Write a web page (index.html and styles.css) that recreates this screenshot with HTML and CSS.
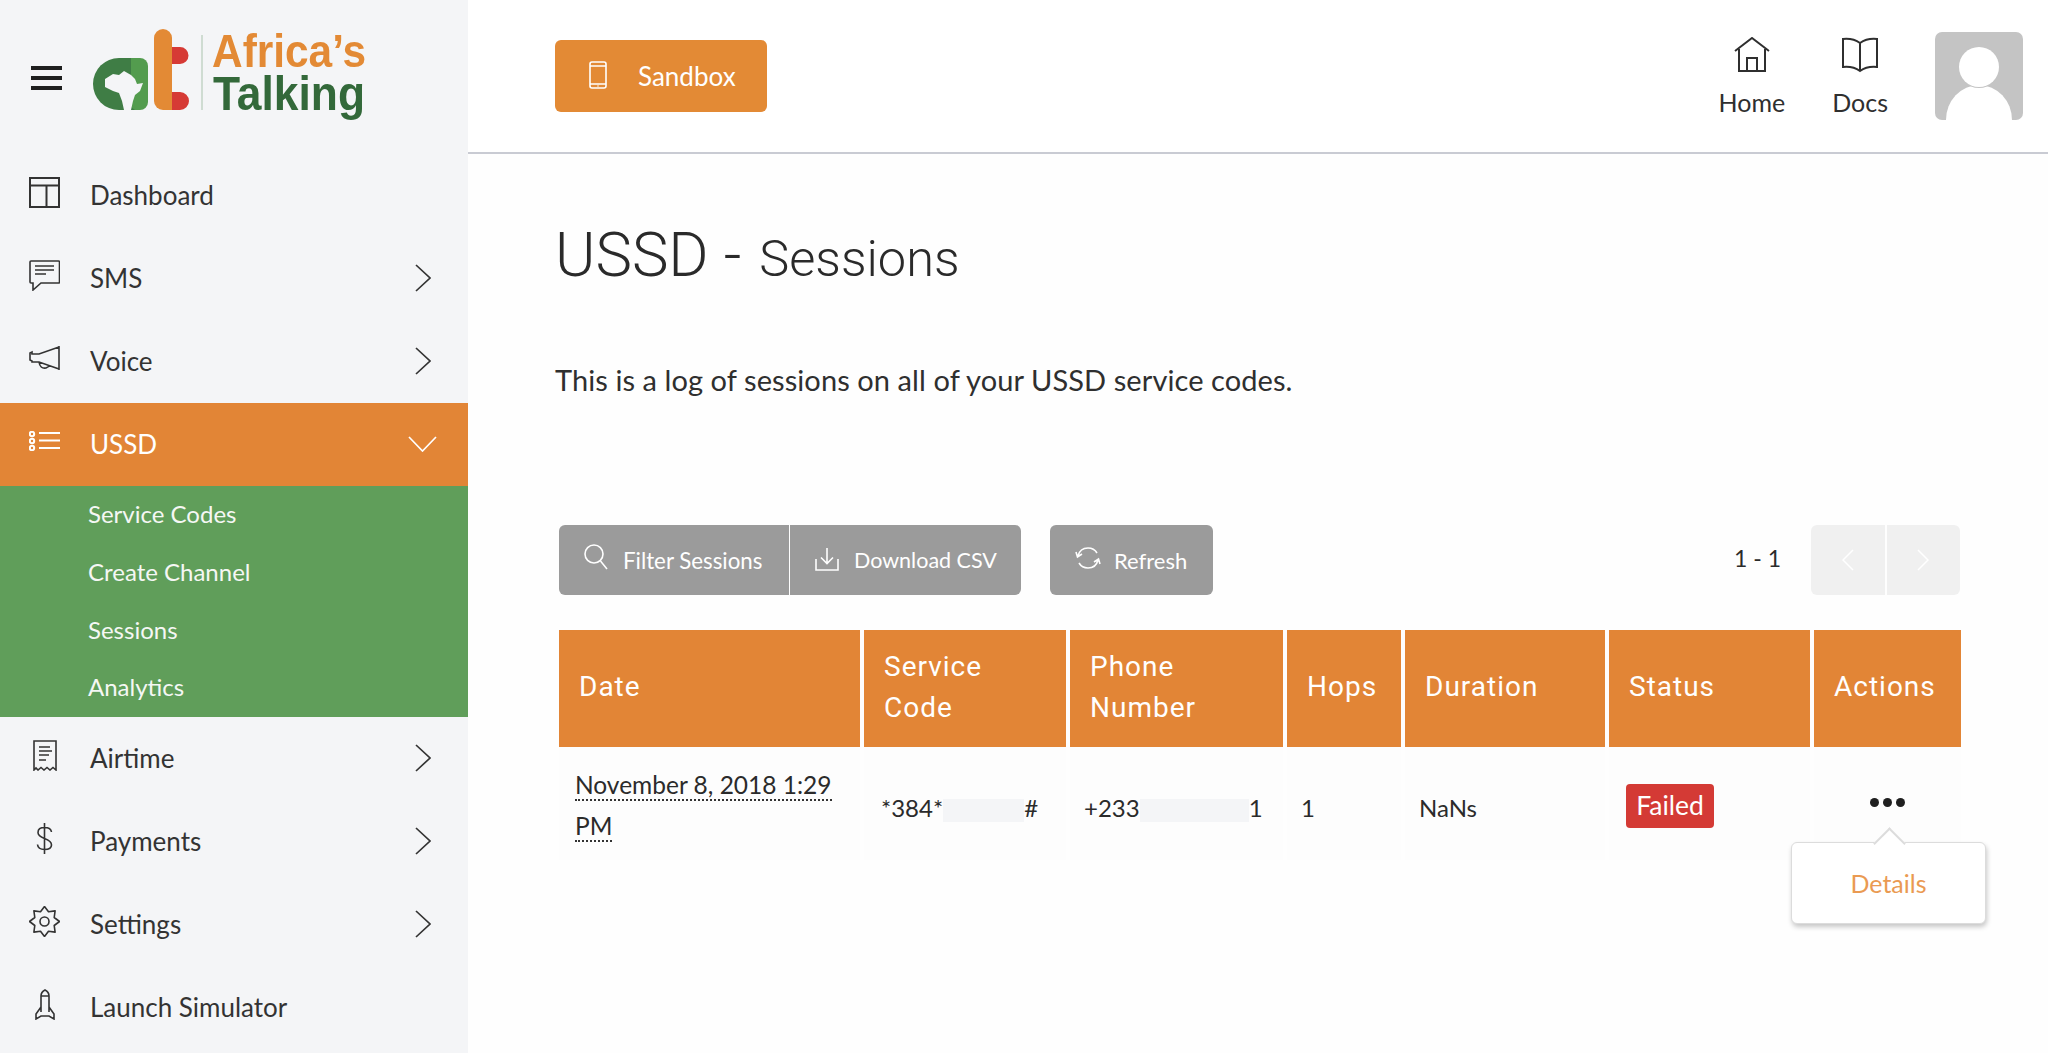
FILE: index.html
```html
<!DOCTYPE html>
<html lang="en">
<head>
<meta charset="utf-8">
<title>USSD - Sessions</title>
<link rel="stylesheet" href="styles.css">
</head>
<body>
<div class="app">
  <aside class="sidebar">
    <div class="brand">
      <span class="burger"><i></i><i></i><i></i></span>
      <svg class="logo" width="273" height="93" viewBox="0 0 273 93">
        <path fill="#3f7d45" d="M26 29H42V81H26A26 26 0 0 1 26 29Z"/>
        <path fill="#539c4e" d="M38 29H47A8 8 0 0 1 55 37V73A8 8 0 0 1 47 81H42A7 7 0 0 1 38 77Z"/>
        <path fill="#f4f5f7" d="M12 50L20 45L26 46L31 42L38 46L42 50L44 55L50 54L47 62L42 66L40 72L38 81H31L29 72L26 64L20 62L12 58Z"/>
        <path fill="#d63a35" d="M72 18H87A8.500 8.500 0 0 1 87 35H72ZM72 63H87A9 9 0 0 1 87 81H72Z"/>
        <path fill="#e38a35" d="M70 0A9 9 0 0 1 79 9V81H70A9 9 0 0 1 61 72V9A9 9 0 0 1 70 0Z"/>
        <rect x="108" y="6" width="2" height="75" fill="#cfdcd2"/>
        <text class="logo-top" x="119" y="38" textLength="154" lengthAdjust="spacingAndGlyphs">Africa’s</text>
        <text class="logo-bottom" x="120" y="81" textLength="152" lengthAdjust="spacingAndGlyphs">Talking</text>
      </svg>
    </div>
    <nav>
      <a class="nav-item"><span class="nav-icon"><svg width="31" height="31" viewBox="0 0 31 31" class="line"><path d="M1 1H30V30H1ZM1 8.500H30M17.500 8.500V30"/></svg></span><span>Dashboard</span></a>
      <a class="nav-item"><span class="nav-icon"><svg width="31" height="31" viewBox="0 0 31 31" class="line thin"><path d="M2 1H29.500Q30.500 1 30.500 2V22Q30.500 23 29.500 23H12L4 30V23H2Q1 23 1 22V2Q1 1 2 1ZM6 6H25M6 10H25M6 14H17"/></svg></span><span>SMS</span><svg class="chev" width="16" height="28" viewBox="0 0 16 28"><path d="M1 1L15 14L1 27"/></svg></a>
      <a class="nav-item"><span class="nav-icon"><svg width="31" height="26" viewBox="0 0 31 26" class="line thin"><path d="M30 1V25M30 2L10 9H3V7L1 8V15L3 16V17H10L30 24M10 17Q11 24 17 23Q20 22 20.500 20"/></svg></span><span>Voice</span><svg class="chev" width="16" height="28" viewBox="0 0 16 28"><path d="M1 1L15 14L1 27"/></svg></a>
      <a class="nav-item active"><span class="nav-icon"><svg width="31" height="20" viewBox="0 0 31 20" class="line"><circle cx="3" cy="3" r="2.200"/><circle cx="3" cy="10" r="2.200"/><circle cx="3" cy="17" r="2.200"/><path d="M10 2H31M10 9.500H31M10 17H31"/></svg></span><span>USSD</span><svg class="chev-down" width="29" height="16" viewBox="0 0 29 16"><path d="M1 1L14.500 15L28 1"/></svg></a>
      <ul class="subnav">
        <li>Service Codes</li>
        <li>Create Channel</li>
        <li>Sessions</li>
        <li>Analytics</li>
      </ul>
      <a class="nav-item"><span class="nav-icon"><svg width="24" height="31" viewBox="0 0 24 31" class="line thin"><path d="M1 30V1H23V30L20 27.500L17 30L14 27.500L11 30L8 27.500L5 30L3 28ZM6 7H17M6 11H19M6 15H16M6 20H13"/></svg></span><span>Airtime</span><svg class="chev" width="16" height="28" viewBox="0 0 16 28"><path d="M1 1L15 14L1 27"/></svg></a>
      <a class="nav-item"><span class="nav-icon"><svg width="17" height="31" viewBox="0 0 17 31" class="line thin"><path d="M8.500 0V31M15.500 9Q15 4.500 8.500 4.500Q2 4.500 2 9.500Q2 13 8.500 15.500Q15.500 18 15.500 22Q15.500 26.500 8.500 26.500Q2 26.500 1.500 21.500"/></svg></span><span>Payments</span><svg class="chev" width="16" height="28" viewBox="0 0 16 28"><path d="M1 1L15 14L1 27"/></svg></a>
      <a class="nav-item"><span class="nav-icon"><svg width="31" height="31" viewBox="0 0 31 31" class="line thin gear"><circle cx="15.500" cy="15.500" r="4.500"/><path d="M15.500 .5L19.500 5.800L26.100 4.900L25.200 11.500L30.500 15.500L25.200 19.500L26.100 26.100L19.500 25.200L15.500 30.500L11.500 25.200L4.900 26.100L5.800 19.500L.5 15.500L5.800 11.500L4.900 4.900L11.500 5.800Z"/></svg></span><span>Settings</span><svg class="chev" width="16" height="28" viewBox="0 0 16 28"><path d="M1 1L15 14L1 27"/></svg></a>
      <a class="nav-item"><span class="nav-icon"><svg width="20" height="31" viewBox="0 0 20 31" class="line thin"><path d="M6 23V7Q6 3 10 1Q14 3 14 7V23M6 7H14M6 18L1 25V30L6 27H14L19 30V25L14 18"/></svg></span><span>Launch Simulator</span></a>
    </nav>
  </aside>

  <div class="main">
    <header class="topbar">
      <a class="sandbox"><svg width="18" height="28" viewBox="0 0 18 28" class="line thin"><rect x="1" y="1" width="16" height="26" rx="2"/><path d="M1 5H17M1 23H17M8.500 25H9.500"/></svg><span>Sandbox</span></a>
      <div class="top-right">
        <a class="top-link"><svg width="36" height="36" viewBox="0 0 36 36" class="line"><path d="M1 14L18 1L35 14M5 12V34H31V12M13 34V21H23V34"/></svg><span>Home</span></a>
        <a class="top-link"><svg width="36" height="36" viewBox="0 0 36 36" class="line"><path d="M18 6Q11 1 1 2V30Q11 29 18 34Q25 29 35 30V2Q25 1 18 6ZM18 6V34"/></svg><span>Docs</span></a>
        <svg class="avatar" width="88" height="88" viewBox="0 0 88 88"><rect width="88" height="88" rx="7" fill="#c4c4c4"/><ellipse cx="44" cy="88" rx="33" ry="35" fill="#fff"/><circle cx="44" cy="35" r="21" fill="#c4c4c4"/><circle cx="44" cy="35" r="20" fill="#fff"/></svg>
      </div>
    </header>

    <section class="content">
      <h1>USSD - <small>Sessions</small></h1>
      <p class="lead">This is a log of sessions on all of your USSD service codes.</p>

      <div class="toolbar">
        <div class="btn-group">
          <a class="btn filter"><svg width="24" height="26" viewBox="0 0 24 26" class="line thin"><circle cx="10" cy="10" r="9"/><path d="M16.500 17L23 25"/></svg><span>Filter Sessions</span></a>
          <a class="btn download"><svg width="24" height="24" viewBox="0 0 24 24" class="line thin"><path d="M12 1V16M6 10.500L12 16.500L18 10.500M1 12V23H23V12"/></svg><span>Download CSV</span></a>
        </div>
        <a class="btn refresh"><svg width="26" height="24" viewBox="0 0 26 24" class="line thin"><path d="M3 10Q5 2 13 2Q19 2 22 7M7 8L2.500 11L1 6M23 14Q21 22 13 22Q7 22 4 17M19 16L23.500 13L25 18"/></svg><span>Refresh</span></a>
        <div class="paging">
          <span class="range">1 - 1</span>
          <div class="pager">
            <a class="page-btn"><svg width="12" height="22" viewBox="0 0 12 22"><path d="M11 1L1 11L11 21"/></svg></a>
            <a class="page-btn"><svg width="12" height="22" viewBox="0 0 12 22"><path d="M1 1L11 11L1 21"/></svg></a>
          </div>
        </div>
      </div>

      <table class="sessions">
        <colgroup>
          <col class="c-date"><col class="c-code"><col class="c-phone"><col class="c-hops"><col class="c-dur"><col class="c-status"><col class="c-act">
        </colgroup>
        <thead>
          <tr><th>Date</th><th>Service Code</th><th>Phone Number</th><th>Hops</th><th>Duration</th><th>Status</th><th>Actions</th></tr>
        </thead>
        <tbody>
          <tr>
            <td class="date-cell"><span class="when">November 8, 2018 1:29 PM</span></td>
            <td class="mid code-cell">*384*<span class="mask code-mask"></span>#</td>
            <td class="mid">+233<span class="mask phone-mask"></span>1</td>
            <td class="mid">1</td>
            <td class="mid">NaNs</td>
            <td class="status-cell"><span class="badge">Failed</span></td>
            <td class="actions">
              <span class="dots"><i></i><i></i><i></i></span>
              <div class="popover"><a>Details</a></div>
            </td>
          </tr>
        </tbody>
      </table>
    </section>
  </div>
</div>
</body>
</html>
```

FILE: styles.css
```css
* { box-sizing: border-box; }
html, body { margin: 0; height: 100%; }
body { font-family: Lato, "Open Sans", sans-serif; color: #2b2b2b; background: #fefefe; overflow: hidden; }
a { display: block; }
.line { fill: none; stroke: currentColor; stroke-width: 2; }
.line.thin { stroke-width: 1.6; }
.gear { stroke-linejoin: round; }

.app { display: flex; height: 1053px; }
.sidebar { width: 468px; flex: none; background: #f4f5f7; }
.brand { height: 154px; display: flex; align-items: flex-start; padding: 29px 0 0 31px; }
.burger { width: 31px; margin-top: 37px; display: flex; flex-direction: column; gap: 6px; }
.burger i { height: 4px; background: #1f1f1f; display: block; }
.logo { margin-left: 31px; filter: blur(.5px); overflow: visible; }
.logo-top { font: bold 46px "Liberation Sans", sans-serif; fill: #e38a35; }
.logo-bottom { font: bold 48px "Liberation Sans", sans-serif; fill: #33693a; }

.nav-item { height: 83px; display: flex; align-items: center; padding: 0 37px 2px 29px; font-size: 26px; color: #333; }
.nav-icon { width: 31px; margin-right: 30px; margin-top: -5px; display: flex; justify-content: center; flex: none; }
.nav-item svg { display: block; }
.chev { margin-left: auto; fill: none; stroke: #333; stroke-width: 1.700; }
.nav-item.active { background: #e28536; color: #fff; }
.chev-down { margin-left: auto; margin-right: -6px; fill: none; stroke: #fff; stroke-width: 1.700; }
.subnav { list-style: none; margin: 0; padding: 0 0 0 88px; background: #609e5a; color: #f5f7f4; font-size: 24px; }
.subnav li { height: 57.750px; line-height: 55px; }

.main { flex: 1; min-width: 0; }
.topbar { height: 154px; border-bottom: 2px solid #c9cbd3; background: #fff; display: flex; align-items: flex-start; padding: 32px 25px 0 87px; }
.sandbox { margin-top: 8px; width: 212px; height: 72px; border-radius: 6px; background: #e38a35; color: #fff; display: flex; align-items: center; padding-left: 34px; font-size: 26px; }
.sandbox svg { margin-right: 31px; margin-top: -2px; }
.top-right { margin-left: auto; display: flex; align-items: flex-start; gap: 47px; }
.top-link { display: flex; flex-direction: column; align-items: center; font-size: 25px; color: #2f2f2f; padding-top: 5px; }
.top-link svg { display: block; margin-bottom: 14px; }
.avatar { display: block; }

.content { padding: 0 88px 0 87px; position: relative; }
h1 { margin: 0; padding-top: 61px; font: 300 61.500px/80px Roboto, sans-serif; color: #2a2a2a; }
h1 small { font-size: 50.500px; font-weight: 300; margin-left: 3px; }
.lead { margin: 61px 0 0; font-size: 29px; line-height: 40px; letter-spacing: .08px; color: #2f2f2f; }

.toolbar { margin: 125px 0 0 4px; display: flex; align-items: center; }
.btn-group { display: flex; gap: 1px; }
.btn { height: 70px; background: #9b9b9b; color: #fff; display: flex; align-items: center; font-size: 22.300px; border-radius: 6px; }
.btn svg { flex: none; }
.filter { width: 230px; padding-left: 25px; border-radius: 6px 0 0 6px; }
.filter svg { margin-right: 15px; margin-top: -6px; }
.download { width: 231px; padding-left: 25px; border-radius: 0 6px 6px 0; font-size: 21.500px; }
.download svg { margin-right: 15px; margin-top: -2px; }
.refresh { width: 163px; margin-left: 29px; padding-left: 25px; font-size: 22px; }
.refresh svg { margin-right: 13px; margin-top: -4px; }
.paging { margin-left: auto; display: flex; align-items: center; gap: 30px; }
.range { font-size: 23px; color: #2b2b2b; margin-top: -4px; }
.pager { display: flex; gap: 2px; }
.page-btn { width: 73.500px; height: 70px; background: #f0f0f0; display: flex; align-items: center; justify-content: center; }
.page-btn:first-child { border-radius: 6px 0 0 6px; }
.page-btn:last-child { border-radius: 0 6px 6px 0; }
.page-btn svg { fill: none; stroke: #fff; stroke-width: 1.500; }

.sessions { margin: 35px 0 0; border-collapse: separate; border-spacing: 4px 0; table-layout: fixed; width: 1409px; }
.c-date { width: 301px; } .c-code { width: 202px; } .c-phone { width: 213px; } .c-hops { width: 114px; }
.c-dur { width: 200px; } .c-status { width: 201px; } .c-act { width: 147px; }
th { background: #e28536; color: #fff; height: 117px; padding: 0 20px 4px; text-align: left; font: 400 28px/41px Roboto, sans-serif; letter-spacing: 1px; }
td { height: 113px; padding: 0 16px; font-size: 24px; line-height: 41px; color: #2b2b2b; background: #fdfdfd; vertical-align: middle; }
.date-cell { padding-top: 2px; font-size: 24.500px; }
.mid { padding-top: 8px; padding-left: 14px; }
.code-cell { padding-left: 17px; }
.status-cell { padding-top: 5px; padding-left: 17px; }
.when { border-bottom: 2px dotted #333; }
.mask { display: inline-block; height: 23px; background: #f4f5f7; vertical-align: middle; }
.code-mask { width: 81px; }
.phone-mask { width: 109px; }
.badge { display: inline-block; width: 88px; text-align: center; background: #d43a35; color: #fff; border-radius: 4px; height: 44px; line-height: 43px; font-size: 26.500px; }
.actions { position: relative; text-align: center; }
.dots { display: flex; justify-content: center; gap: 4px; margin-top: -3px; }
.dots i { width: 9px; height: 9px; border-radius: 50%; background: #1f1f1f; display: block; }
.popover { position: absolute; left: -23px; top: 95px; width: 195px; height: 82px; background: #fff; border: 1px solid #dcdcdc; border-radius: 6px; box-shadow: 1px 3px 5px rgba(0, 0, 0, .22); display: flex; align-items: center; justify-content: center; color: #ea9a52; font-size: 25px; }
.popover::before { content: ""; position: absolute; left: 86px; top: -11px; width: 21px; height: 21px; background: #fff; border: 2px solid #dcdcdc; border-right: 0; border-bottom: 0; transform: rotate(45deg); }
```
